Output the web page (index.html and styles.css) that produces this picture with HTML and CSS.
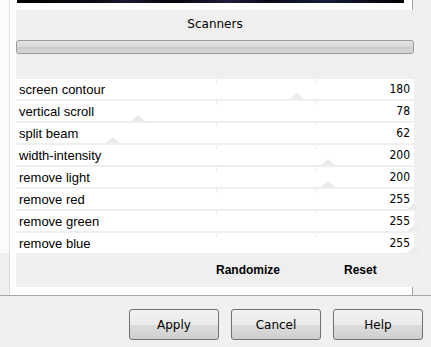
FILE: index.html
```html
<!DOCTYPE html>
<html lang="en">
<head>
  <meta charset="UTF-8" />
  <title>Scanners</title>
  <link rel="stylesheet" href="styles.css">
</head>
<body>

  <div class="frame">
    <div class="stub"></div>

    <div class="panel">
      <div class="preview"></div>

      <section class="filter">
        <h2 class="filter-title">Scanners</h2>
        <div class="progress"></div>

        <!-- Sliders -->
        <div class="rows">
          <div class="row"><span>screen contour</span><span class="val">180</span><i class="thumb" style="left: 70.6%"></i></div>
          <div class="row"><span>vertical scroll</span><span class="val">78</span><i class="thumb" style="left: 30.6%"></i></div>
          <div class="row"><span>split beam</span><span class="val">62</span><i class="thumb" style="left: 24.3%"></i></div>
          <div class="row"><span>width-intensity</span><span class="val">200</span><i class="thumb" style="left: 78.4%"></i></div>
          <div class="row"><span>remove light</span><span class="val">200</span><i class="thumb" style="left: 78.4%"></i></div>
          <div class="row"><span>remove red</span><span class="val">255</span><i class="thumb" style="left: 100%"></i></div>
          <div class="row"><span>remove green</span><span class="val">255</span><i class="thumb" style="left: 100%"></i></div>
          <div class="row"><span>remove blue</span><span class="val">255</span><i class="thumb" style="left: 100%"></i></div>
        </div>

        <div class="filter-actions">
          <span class="link-btn randomize">Randomize</span>
          <span class="link-btn reset">Reset</span>
        </div>
      </section>
    </div>
  </div>

  <footer class="buttons">
    <button>Apply</button>
    <button>Cancel</button>
    <button>Help</button>
  </footer>

</body>
</html>
```

FILE: styles.css
```css
/* General */
body {
  margin: 0;
  background: #f0f0f0;
  font-family: 'Liberation Sans', Arial, sans-serif;
  font-size: 13px;
  color: #000;
  width: 431px;
  height: 347px;
  overflow: hidden;
}

.frame {
  display: flex;
  align-items: flex-start;
  height: 295px;
  border-bottom: 1px solid #a7a7a7;
}

.stub {
  width: 9px;
  height: 253px;
  background: #fbfbfb;
}

.panel {
  width: 404px;
  height: 295px;
  box-sizing: border-box;
  background: #fff;
  border-left: 1px solid #dcdcdc;
  border-right: 1px solid #a0a0a0;
  padding: 0 7px 0 6px;
}

.preview {
  height: 3px;
  margin: 0 1px 7px 1px;
  background: linear-gradient(90deg, #000 0%, #0c0a14 20%, #1c1730 28%, #05050a 40%, #221a3a 55%, #0a0a18 65%, #181c38 80%, #000 100%);
}

/* Filter box */
.filter {
  background: #efefef;
  width: 398px;
  height: 277px;
}

.filter-title {
  margin: 0;
  padding-top: 7px;
  height: 23px;
  font-weight: normal;
  text-align: center;
  line-height: 15px;
  font-family: 'DejaVu Sans', sans-serif;
  font-size: 12px;
}

.progress {
  height: 12px;
  border: 1px solid #9a9a9a;
  border-radius: 3px;
  background: linear-gradient(#e6e6e6, #d8d8d8 50%, #cdcdcd 51%, #d6d6d6);
}

.rows {
  margin-top: 25px;
}

.row {
  position: relative;
  display: flex;
  justify-content: space-between;
  align-items: center;
  height: 20px;
  margin-bottom: 2px;
  padding: 0 4px 0 3px;
  background: #fff;
  background-image:
    linear-gradient(#ececec, #ececec),
    linear-gradient(#ececec, #ececec);
  background-size: 1px 4px, 1px 4px;
  background-position: 50.5% 0, 75.5% 0;
  background-repeat: no-repeat;
}

.row:last-child {
  margin-bottom: 0;
}

.val {
  font-family: 'DejaVu Sans Condensed', 'Liberation Sans', sans-serif;
  font-size: 12px;
}

.thumb {
  position: absolute;
  bottom: 0;
  width: 0;
  height: 0;
  margin-left: -7px;
  border-left: 7px solid transparent;
  border-right: 7px solid transparent;
  border-bottom: 6px solid #ebebeb;
}

.filter-actions {
  height: 34px;
  display: flex;
  align-items: center;
  font-weight: bold;
  font-size: 12px;
}

.randomize {
  margin-left: 200px;
}

.reset {
  margin-left: 64px;
}

/* Dialog buttons */
.buttons {
  display: flex;
  justify-content: flex-end;
  gap: 12px;
  padding: 13px 8px 0 0;
}

.buttons button {
  width: 90px;
  height: 31px;
  border: 1px solid #707070;
  border-radius: 3px;
  background: linear-gradient(#f2f2f2, #ebebeb 50%, #dddddd 51%, #cfcfcf);
  font-family: 'DejaVu Sans', sans-serif;
  font-size: 12px;
  color: #000;
  padding: 0;
}
```
